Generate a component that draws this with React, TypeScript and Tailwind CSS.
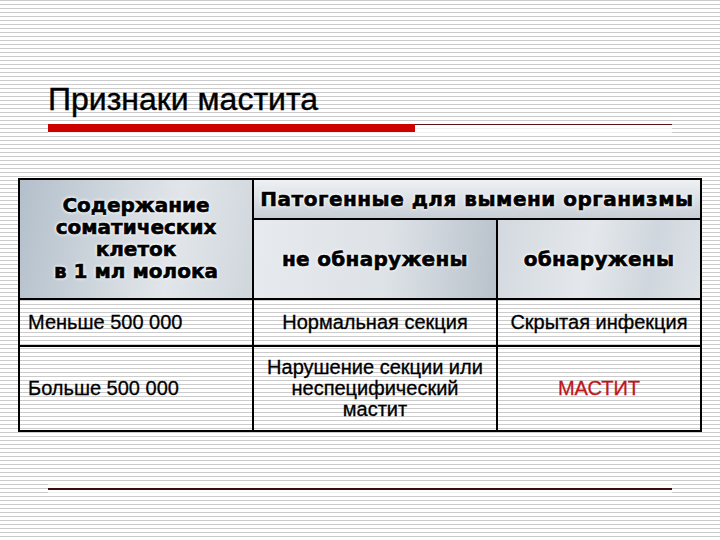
export default function App() {
  const head = "font-['DejaVu_Sans',sans-serif] font-bold text-black [-webkit-text-stroke:0.6px_#000] [text-shadow:0_0_2px_#fff,0_0_3px_#fff,0_0_4px_#fff]";
  const cell = "border-2 border-black font-['Liberation_Sans',Arial,sans-serif] text-[20px] leading-[21px] [-webkit-text-stroke:0.3px_currentColor]";

  return (
    <div className="w-[720px] h-[540px] overflow-hidden flex flex-col bg-[repeating-linear-gradient(to_bottom,#cbcbcb_0px,#cbcbcb_1px,#ffffff_1px,#ffffff_4px)]">
      <div className="pl-[48px] pt-[81px]">
        <h1 className="font-['Liberation_Sans',Arial,sans-serif] text-[32px] leading-[36px] text-black [-webkit-text-stroke:0.4px_#000]">
          Признаки мастита
        </h1>
        <div className="mt-[6px] w-[624px] flex items-start bg-white/70 py-[1px]">
          <div className="w-[367px] h-[8px] bg-[#cc0000]" />
          <div className="flex-1 border-t border-[#5a1414]" />
        </div>
      </div>

      <div className="pl-[18px] mt-[45px]">
        <table className="table-fixed border-collapse w-[682px] border-2 border-black">
          <colgroup>
            <col className="w-[234px]" />
            <col className="w-[244px]" />
            <col className="w-[204px]" />
          </colgroup>
          <tbody>
            <tr className="h-[40px]">
              <td
                rowSpan={2}
                className={`border-2 border-black text-center align-middle bg-[linear-gradient(100deg,#b3bfcb_0%,#cdd5dc_35%,#e2e6ea_65%,#cfd6dc_100%)] ${head} text-[20px] leading-[22px] pb-[2px]`}
              >
                Содержание
                <br />
                соматических
                <br />
                клеток
                <br />в 1 мл молока
              </td>
              <td
                colSpan={2}
                className={`border-2 border-black text-center align-middle bg-[linear-gradient(to_bottom,#eef1f4_0%,#dde2e7_45%,#c6cdd4_100%)] ${head} text-[20px] tracking-[0.5px] whitespace-nowrap`}
              >
                Патогенные для вымени организмы
              </td>
            </tr>
            <tr className="h-[80px]">
              <td
                className={`border-2 border-black text-center align-middle bg-[linear-gradient(95deg,#e7eaee_0%,#dde2e7_55%,#b9c2cb_100%)] ${head} text-[20px] tracking-[0.3px]`}
              >
                не обнаружены
              </td>
              <td
                className={`border-2 border-black text-center align-middle bg-[linear-gradient(100deg,#d3d9df_0%,#e4e8ec_45%,#cfd6dd_75%,#dde2e7_100%)] ${head} text-[20px] tracking-[0.3px]`}
              >
                обнаружены
              </td>
            </tr>
            <tr className="h-[47px]">
              <td className={`${cell} text-black pl-[8px] align-middle`}>Меньше 500 000</td>
              <td className={`${cell} text-black text-center align-middle`}>Нормальная секция</td>
              <td className={`${cell} text-black text-center align-middle whitespace-nowrap`}>Скрытая инфекция</td>
            </tr>
            <tr className="h-[85px]">
              <td className={`${cell} text-black pl-[8px] align-middle`}>Больше 500 000</td>
              <td className={`${cell} text-black text-center align-middle`}>
                Нарушение секции или
                <br />
                неспецифический
                <br />
                мастит
              </td>
              <td className={`${cell} text-[#c0141a] text-center align-middle`}>МАСТИТ</td>
            </tr>
          </tbody>
        </table>
      </div>

      <div className="pl-[48px] mt-[50px]">
        <div className="w-[624px] py-[6px] bg-white/70">
          <div className="h-[2px] bg-[#3a0c0c]" />
        </div>
      </div>
    </div>
  );
}
